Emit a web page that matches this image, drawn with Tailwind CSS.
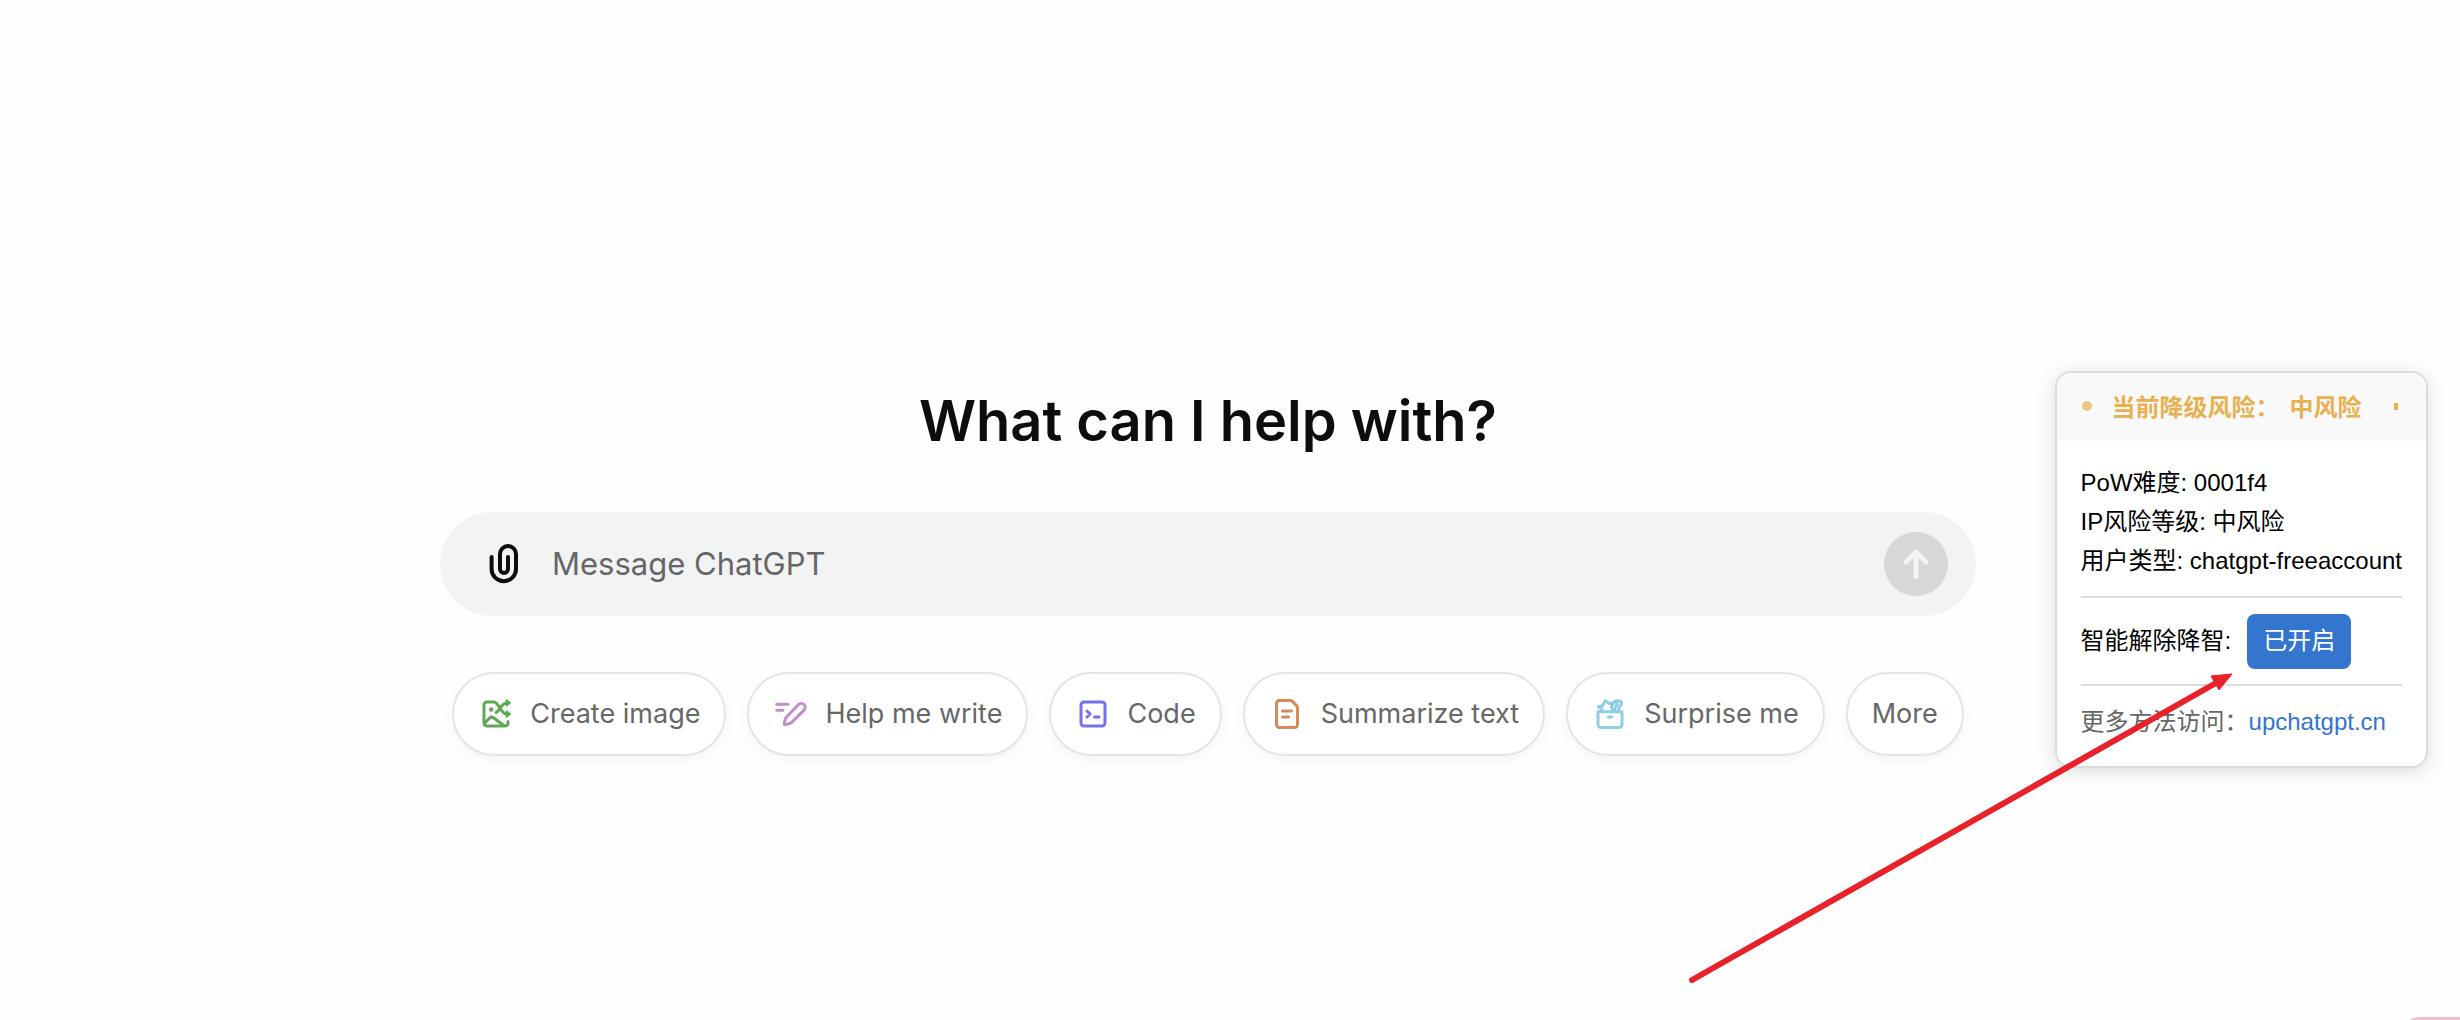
<!DOCTYPE html>
<html lang="en">
<head>
<meta charset="utf-8">
<title>ChatGPT</title>
<script src="https://cdn.jsdelivr.net/npm/@tailwindcss/browser@4"></script>
</head>
<body class="relative min-h-screen bg-[#fefefe] font-['Inter','Noto_Sans_CJK_SC',sans-serif] text-[#0d0d0d]">
<main class="flex min-h-screen flex-col items-center pt-96 pr-11">
  <h1 class="text-[56px] leading-[74px] font-semibold">What can I help with?</h1>

  <form class="mt-[54px] flex h-26 w-full max-w-384 items-center rounded-full bg-[#f3f3f3] pr-7 pl-10">
    <button type="button" aria-label="Attach file" class="flex size-12 items-center justify-center">
      <svg class="size-12" viewBox="0 0 24 24" fill="none" stroke="currentColor" stroke-width="2" stroke-linecap="round"><path d="M5.800 8.500v6a6.100 6.100 0 0 0 12.200 0V7a4 4 0 0 0-8 0v7.500a2 2 0 0 0 4 0v-6"/></svg>
    </button>
    <input type="text" aria-label="Message ChatGPT" placeholder="Message ChatGPT" class="ml-6 min-w-0 flex-1 bg-transparent text-[31px] leading-10 outline-none placeholder:text-[#666]">
    <button type="button" aria-label="Send" class="flex size-16 items-center justify-center rounded-full bg-[#d7d7d7] text-[#f3f3f3]">
      <svg class="size-16" viewBox="0 0 64 64" fill="none" stroke="currentColor" stroke-width="5" stroke-linecap="round" stroke-linejoin="round"><path d="M32 44.500V20M22 30l10-10 10 10"/></svg>
    </button>
  </form>

  <div class="mt-14 flex justify-center gap-[21px] text-[27px] leading-9 whitespace-nowrap text-[#676767]">
    <button class="flex h-21 items-center gap-4 rounded-full border-2 border-[#e5e5e5] bg-white px-6 shadow-[0_4px_12px_rgba(0,0,0,0.04)]">
      <svg class="size-9 text-[#5fa856]" viewBox="0 0 24 24" fill="none" stroke="currentColor" stroke-width="2" stroke-linecap="round" stroke-linejoin="round"><path d="M20 17v1a2 2 0 0 1-2 2H6a2 2 0 0 1-2-2V6a2 2 0 0 1 2-2h4.500c3.800 0 4 8 9 8"/><path d="m4.500 18 3.300-3.300a2 2 0 0 1 2.700 0L17 19.500"/><path d="M12 11c2.500-1 3.500-6.500 7.500-6.500"/><circle cx="8.800" cy="9" r="1" fill="currentColor" stroke-width="1"/><path d="m19 2.500 2.500 2-2.500 2zM19 10l2.500 2-2.500 2z" fill="currentColor" stroke-width="1"/></svg>
      Create image</button>
    <button class="flex h-21 items-center gap-4 rounded-full border-2 border-[#e5e5e5] bg-white px-6 shadow-[0_4px_12px_rgba(0,0,0,0.04)]">
      <svg class="size-9 text-[#c08fcb]" viewBox="0 0 24 24" fill="none" stroke="currentColor" stroke-width="2" stroke-linecap="round" stroke-linejoin="round"><path d="M2.500 5.500H10M2.500 9.500H6.500"/><path d="M17 5.700a2.600 2.600 0 0 1 3.700 3.700l-8.200 8.200c-1.400 1.200-3 1.400-4.900 1.400 0-1.900.2-3.700 1.400-5z"/></svg>
      Help me write</button>
    <button class="flex h-21 items-center gap-4 rounded-full border-2 border-[#e5e5e5] bg-white px-6 shadow-[0_4px_12px_rgba(0,0,0,0.04)]">
      <svg class="size-9 text-[#7472e6]" viewBox="0 0 24 24" fill="none" stroke="currentColor" stroke-width="2" stroke-linecap="round" stroke-linejoin="round"><rect x="4" y="4" width="16" height="16" rx="2"/><path d="m8 10 2 2-2 2M13 14h3"/></svg>
      Code</button>
    <button class="flex h-21 items-center gap-4 rounded-full border-2 border-[#e5e5e5] bg-white px-6 shadow-[0_4px_12px_rgba(0,0,0,0.04)]">
      <svg class="size-9 text-[#d68a58]" viewBox="0 0 24 24" fill="none" stroke="currentColor" stroke-width="2" stroke-linecap="round" stroke-linejoin="round"><path d="M5 5a2 2 0 0 1 2-2h7.200a2 2 0 0 1 1.400.600l2.800 2.800a2 2 0 0 1 .600 1.400V19a2 2 0 0 1-2 2H7a2 2 0 0 1-2-2zM9 10h6M9 14h4"/></svg>
      Summarize text</button>
    <button class="flex h-21 items-center gap-4 rounded-full border-2 border-[#e5e5e5] bg-white px-6 shadow-[0_4px_12px_rgba(0,0,0,0.04)]">
      <svg class="size-9 text-[#8fcde3]" viewBox="0 0 24 24" fill="none" stroke="currentColor" stroke-width="2" stroke-linecap="round" stroke-linejoin="round"><path d="M4 10.500h16V19a2 2 0 0 1-2 2H6a2 2 0 0 1-2-2zM11 14h2"/><path d="M6.500 10V8.500L4.200 7.200l3-1L9 3l2.200 2 2.800-.4-1 2.600L14 10"/><path d="M14.500 4.300c.8-1 1.500-1.200 2.500-1 1.800-.3 3.200.6 2.600 2-.3 1-1.300 1.500-1.500 2.400-.2.900-.3 1.500-.8 2.300M16.500 3.800c.6 1.200.2 2.300-.6 3.300-.5.800-.8 1.900-1.300 2.900"/></svg>
      Surprise me</button>
    <button class="flex h-21 items-center rounded-full border-2 border-[#e5e5e5] bg-white px-6 shadow-[0_4px_12px_rgba(0,0,0,0.04)]">More</button>
  </div>
</main>

<aside class="absolute top-[371px] right-8 overflow-hidden rounded-2xl border-2 border-[#dcdcdc] bg-white font-['Liberation_Sans','Noto_Sans_CJK_SC',sans-serif] text-2xl text-black shadow-[0_4px_20px_rgba(0,0,0,0.13)]">
  <header class="flex h-17 items-center px-6 pb-0.5 font-['Noto_Sans_CJK_SC',sans-serif] font-bold whitespace-nowrap text-[#e9b04f] bg-[#f9f9f9]">
    <span class="mr-5 ml-px size-[10px] rounded-full bg-[#f0c580]"></span>
    <span>当前降级风险：</span>
    <span class="ml-2.5">中风险</span>
    <span class="mr-1 ml-auto h-[7px] w-1 bg-[#e9b04f]"></span>
  </header>
  <div class="px-6 pt-[22px] pb-2">
    <div class="leading-[39px]">
      <p>PoW难度: 0001f4</p>
      <p>IP风险等级: 中风险</p>
      <p>用户类型: chatgpt-freeaccount</p>
    </div>
    <div class="mt-4 flex h-[90px] items-center gap-4 border-y-2 border-[#dcdcdc]">
      <span>智能解除降智:</span>
      <button class="h-[55px] rounded-lg bg-[#3375cf] px-4 text-white">已开启</button>
    </div>
    <p class="flex h-18 items-center text-[#666]"><span>更多方法访问：</span><a href="#" class="text-[#3375cf]">upchatgpt.cn</a></p>
  </div>
</aside>

<svg class="pointer-events-none absolute top-[672px] right-[226px] h-[312px] w-[546px]" viewBox="0 0 546 312" aria-hidden="true"><path d="M4 308 528 11" fill="none" stroke="#e8212a" stroke-width="6" stroke-linecap="round"/><path d="M544 2 531 18 527 11 523 4z" fill="#e8212a" stroke="#e8212a"/></svg>
<div class="absolute right-0 bottom-0 h-[3px] w-[50px] rounded-tl-[12px_3px] bg-[#f0bfcf]"></div>
</body>
</html>
